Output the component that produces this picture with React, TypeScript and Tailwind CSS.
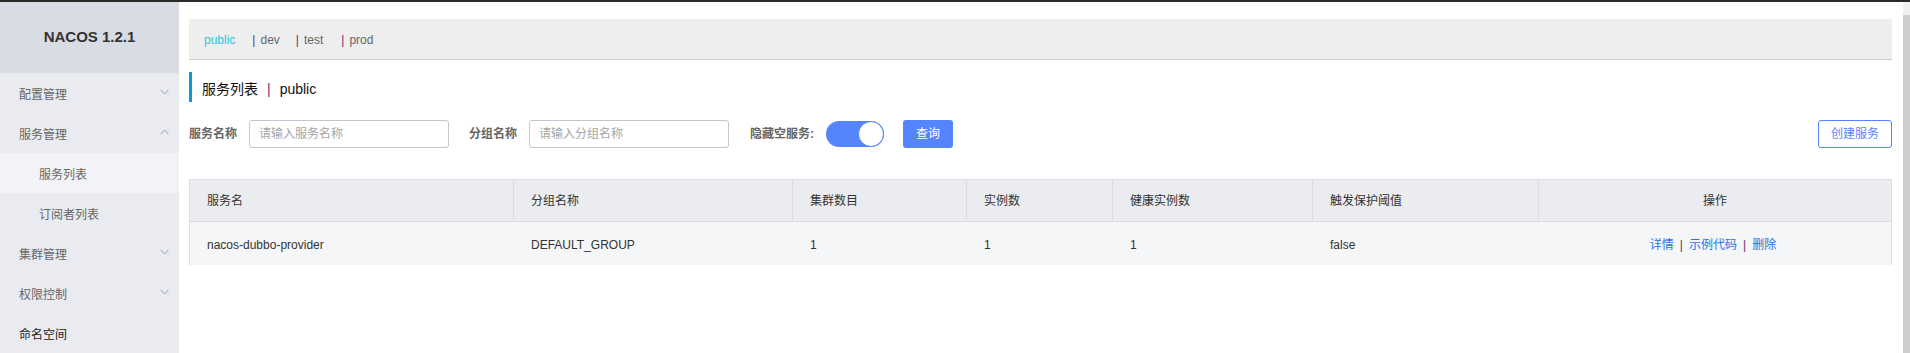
import React from 'react'

const font = { fontFamily: '"Liberation Sans", "Noto Sans CJK SC", sans-serif' }

interface MenuItem {
  label: string
  arrow?: 'down' | 'up'
  sub?: boolean
  active?: boolean
  dark?: boolean
}

const menu: MenuItem[] = [
  { label: '配置管理', arrow: 'down' },
  { label: '服务管理', arrow: 'up' },
  { label: '服务列表', sub: true, active: true },
  { label: '订阅者列表', sub: true },
  { label: '集群管理', arrow: 'down' },
  { label: '权限控制', arrow: 'down' },
  { label: '命名空间', dark: true },
]

const columns = [
  { title: '服务名', w: 'w-[324px]' },
  { title: '分组名称', w: 'w-[279px]' },
  { title: '集群数目', w: 'w-[174px]' },
  { title: '实例数', w: 'w-[146px]' },
  { title: '健康实例数', w: 'w-[200px]' },
  { title: '触发保护阈值', w: 'w-[226px]' },
]

const row = ['nacos-dubbo-provider', 'DEFAULT_GROUP', '1', '1', '1', 'false']

const namespaces = ['dev', 'test', 'prod']

function Chevron({ dir }: { dir: 'down' | 'up' }) {
  return (
    <svg width="9" height="6" viewBox="0 0 9 6" className="shrink-0">
      <polyline
        points={dir === 'down' ? '0.5,0.8 4.5,4.8 8.5,0.8' : '0.5,5.2 4.5,1.2 8.5,5.2'}
        fill="none"
        stroke="#9aa0ab"
        strokeWidth="1"
      />
    </svg>
  )
}

function Sidebar() {
  return (
    <div className="w-[179px] shrink-0 flex flex-col bg-[#e9ebf0]">
      <div className="h-[71px] shrink-0 bg-[#d8dce3] flex items-center justify-center">
        <span className="text-[15px] font-bold text-[#333]">NACOS 1.2.1</span>
      </div>
      {menu.map(m => (
        <div
          key={m.label}
          className={
            'h-10 shrink-0 flex items-center justify-between pr-[10px] pt-[3px] text-xs ' +
            (m.sub ? 'pl-[39px] ' : 'pl-[19px] ') +
            (m.active ? 'bg-[#f2f3f6] ' : '') +
            (m.dark ? 'text-[#222]' : 'text-[#666]')
          }
        >
          <span>{m.label}</span>
          {m.arrow && (
            <span className="-mt-[6px]">
              <Chevron dir={m.arrow} />
            </span>
          )}
        </div>
      ))}
    </div>
  )
}

function Sep() {
  return <span className="text-[#6b2a73]">|</span>
}

export default function App() {
  return (
    <div className="w-[1910px] h-[353px] flex flex-col bg-white overflow-hidden" style={font}>
      <div className="h-[2px] bg-[#2a2a2a] shrink-0" />
      <div className="flex flex-1 min-h-0">
        <Sidebar />

        <div className="flex-1 pl-[10px] pr-[11px] pt-[17px]">
          {/* namespace bar */}
          <div className="h-[41px] bg-[#eeeeee] border-b border-[#cccccc] flex items-center pl-[15px] pt-[2px] text-xs text-[#666]">
            <span className="text-[#33c3dd] mr-[17px]">public</span>
            {namespaces.map((n, i) => (
              <span key={n} className={i === 1 ? 'mr-[18px]' : 'mr-[16px]'}>
                <span className="mr-[5px]"><Sep /></span>
                {n}
              </span>
            ))}
          </div>

          {/* title */}
          <div className="mt-[12px] h-[30px] border-l-[3px] border-[#0a9bd3] pl-[10px] pt-[3px] flex items-center text-sm text-[#111]">
            <span>服务列表</span>
            <span className="mx-[9px]"><Sep /></span>
            <span>public</span>
          </div>

          {/* search row */}
          <div className="mt-[18px] h-[28px] flex items-center text-xs">
            <span className="font-bold text-[#666] mr-[12px]">服务名称</span>
            <div className="w-[200px] h-[28px] border border-[#c4c6cf] rounded-[3px] flex items-center pl-[9px] text-[#a5a5a5]">
              请输入服务名称
            </div>
            <span className="font-bold text-[#666] ml-[20px] mr-[12px]">分组名称</span>
            <div className="w-[200px] h-[28px] border border-[#c4c6cf] rounded-[3px] flex items-center pl-[9px] text-[#a5a5a5]">
              请输入分组名称
            </div>
            <span className="font-bold text-[#666] ml-[21px] mr-[12px]">隐藏空服务:</span>
            <div className="w-[58px] h-[26px] rounded-full bg-[#5584ff] flex items-center justify-end">
              <div className="w-[26px] h-[26px] rounded-full bg-white border border-[#5584ff]" />
            </div>
            <div className="ml-[19px] w-[50px] h-[28px] rounded-[3px] bg-[#5584ff] text-white flex items-center justify-center">
              查询
            </div>
            <div className="ml-auto w-[74px] h-[28px] rounded-[3px] border border-[#5584ff] text-[#5584ff] bg-white flex items-center justify-center">
              创建服务
            </div>
          </div>

          {/* table */}
          <div className="mt-[31px] border-x border-t border-[#dcdee3] text-xs text-[#333]">
            <div className="flex h-[42px] bg-[#ebecf0] border-b border-[#dcdee3]">
              {columns.map(c => (
                <div key={c.title} className={c.w + ' shrink-0 border-r border-[#dcdee3] flex items-center pl-[17px] pt-[1px]'}>
                  {c.title}
                </div>
              ))}
              <div className="flex-1 flex items-center justify-center pt-[1px]">操作</div>
            </div>
            <div className="flex h-[43px] bg-[#f5f6f8]">
              {row.map((v, i) => (
                <div key={i} className={columns[i].w + ' shrink-0 flex items-center pl-[17px] pt-[2px]'}>
                  {v}
                </div>
              ))}
              <div className="flex-1 flex items-center justify-center gap-[6px] pt-[2px] pr-[4px] text-[#2473e8]">
                <span>详情</span>
                <Sep />
                <span>示例代码</span>
                <Sep />
                <span>删除</span>
              </div>
            </div>
          </div>
        </div>

        {/* scrollbar */}
        <div className="w-[7px] shrink-0 flex flex-col bg-[#cdcdcd]">
          <div className="h-[13px] bg-[#f1f1f1]" />
        </div>
      </div>
    </div>
  )
}
